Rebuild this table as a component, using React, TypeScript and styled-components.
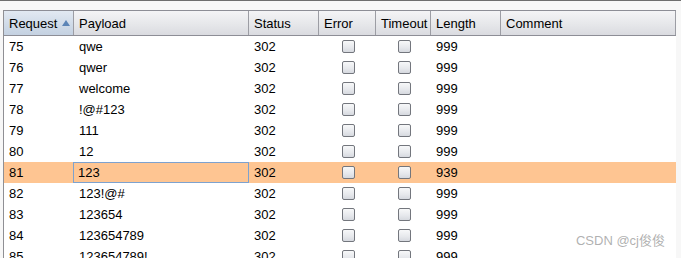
import React from 'react'
import styled, { createGlobalStyle } from 'styled-components'

type Row = { id: number; payload: string; status: number; length: number }

const rows: Row[] = [
	{ id: 75, payload: 'qwe', status: 302, length: 999 },
	{ id: 76, payload: 'qwer', status: 302, length: 999 },
	{ id: 77, payload: 'welcome', status: 302, length: 999 },
	{ id: 78, payload: '!@#123', status: 302, length: 999 },
	{ id: 79, payload: '111', status: 302, length: 999 },
	{ id: 80, payload: '12', status: 302, length: 999 },
	{ id: 81, payload: '123', status: 302, length: 939 },
	{ id: 82, payload: '123!@#', status: 302, length: 999 },
	{ id: 83, payload: '123654', status: 302, length: 999 },
	{ id: 84, payload: '123654789', status: 302, length: 999 },
	{ id: 85, payload: '123654789!', status: 302, length: 999 },
]

const columns = ['Request', 'Payload', 'Status', 'Error', 'Timeout', 'Length', 'Comment']
const SELECTED = 81

const GlobalStyle = createGlobalStyle`
	html, body {
		margin: 0;
		padding: 0;
		background: #f5f5f5;
	}
	body {
		font-family: "Liberation Sans", Arial, sans-serif;
		font-size: 13px;
		color: #000;
	}
`

const Page = styled.div`
	position: relative;
	width: 681px;
	height: 258px;
	overflow: hidden;
	border-top: 1px solid #6e6e6e;
	box-sizing: border-box;
	padding: 9px 0 0 3px;
	background: #f7f7f7;
`

const Table = styled.div`
	width: 673px;
	background: #fff;
	border-left: 1px solid #8f8f94;
	box-sizing: border-box;
	height: 260px;
`

const Grid = styled.div`
	display: grid;
	grid-template-columns: 70px 175px 70px 57px 55px 70px 175px;
`

const Header = styled(Grid)`
	height: 26px;
	border-top: 1px solid #8d8e96;
	border-bottom: 1px solid #8d8e96;
	box-sizing: border-box;
`

const HeadCell = styled.div<{ $sorted?: boolean }>`
	display: flex;
	align-items: center;
	gap: 5px;
	padding-left: 5px;
	box-sizing: border-box;
	border-right: 1px solid #9c9da4;
	background: ${(p) =>
		p.$sorted
			? 'linear-gradient(to bottom, #e2e9f2 0%, #d0dbe8 55%, #c4d1e1 100%)'
			: 'linear-gradient(to bottom, #f4f4f6 0%, #e6e7ea 55%, #dadbe0 100%)'};
	white-space: nowrap;
	overflow: hidden;
`

const SortArrow = styled.span`
	width: 0;
	height: 0;
	border-left: 4px solid transparent;
	border-right: 4px solid transparent;
	border-bottom: 6px solid #5b84b6;
	margin-top: -1px;
`

const BodyRow = styled(Grid)<{ $selected?: boolean }>`
	height: 21px;
	background: ${(p) => (p.$selected ? '#fec592' : '#fff')};
`

const Cell = styled.div<{ $focus?: boolean }>`
	display: flex;
	align-items: center;
	padding-left: ${(p) => (p.$focus ? '4px' : '5px')};
	box-sizing: border-box;
	white-space: nowrap;
	overflow: hidden;
	border: ${(p) => (p.$focus ? '1px solid #7da2cf' : 'none')};
	margin-left: ${(p) => (p.$focus ? '-1px' : '0')};
	width: ${(p) => (p.$focus ? 'calc(100% + 1px)' : 'auto')};
`

const CheckCell = styled.div`
	display: flex;
	align-items: center;
	justify-content: center;
`

const Check = styled.span`
	display: block;
	width: 13px;
	height: 13px;
	box-sizing: border-box;
	border: 1px solid #73767d;
	border-radius: 2px;
	background: linear-gradient(to bottom, #f7f8f9 0%, #e6e8ec 60%, #d6d9df 100%);
	margin-left: 1px;
`

const Watermark = styled.div`
	position: absolute;
	right: 16px;
	bottom: 9px;
	font-family: "Liberation Sans", "Noto Sans CJK SC", sans-serif;
	font-size: 13px;
	color: rgba(150, 150, 150, 0.75);
	pointer-events: none;
`

const App: React.FunctionComponent = () => {
	return (
		<Page>
			<GlobalStyle />
			<Table>
				<Header>
					{columns.map((c, i) => (
						<HeadCell key={c} $sorted={i === 0}>
							{c}
							{i === 0 && <SortArrow />}
						</HeadCell>
					))}
				</Header>
				{rows.map((r) => (
					<BodyRow key={r.id} $selected={r.id === SELECTED}>
						<Cell>{r.id}</Cell>
						<Cell $focus={r.id === SELECTED}>{r.payload}</Cell>
						<Cell>{r.status}</Cell>
						<CheckCell>
							<Check />
						</CheckCell>
						<CheckCell>
							<Check />
						</CheckCell>
						<Cell>{r.length}</Cell>
						<Cell />
					</BodyRow>
				))}
			</Table>
			<Watermark>CSDN @cj俊俊</Watermark>
		</Page>
	)
}

export default App
